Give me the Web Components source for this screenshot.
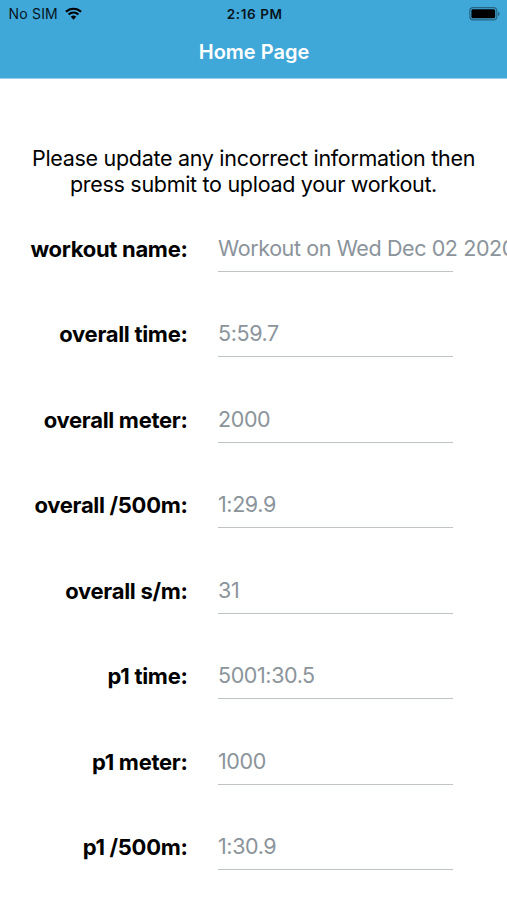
<!DOCTYPE html>
<html lang="en">
<head>
    <meta charset="UTF-8">
    <meta name="viewport" content="width=device-width, initial-scale=1.0">
    <title>Home Page</title>
    <style>
        body {
            margin: 0;
            height: 900px;
            overflow: hidden;
            background: #fff;
            color: #000;
            font-family: Inter, "Liberation Sans", sans-serif;
        }
    </style>
</head>
<body>
<workout-screen></workout-screen>

<script>

    class StatusBar extends HTMLElement {
        constructor() {
            super();
            this.attachShadow({mode: 'open'});
            this.shadowRoot.innerHTML = `
                <style>
                    :host {
                        display: grid;
                        grid-template-columns: 1fr auto 1fr;
                        align-items: center;
                        height: 27px;
                        padding: 0 6px 0 8.5px;
                        color: #06141b;
                        font-size: 13.5px;
                    }
                    .left { display: flex; align-items: center; gap: 7px; }
                    .time { font-weight: 600; letter-spacing: 0.6px; }
                    .battery { justify-self: end; }
                    svg { display: block; }
                    .carrier { font-size: 14px; letter-spacing: 0.2px; }
                </style>
                <div class="left">
                    <span class="carrier"><slot name="carrier"></slot></span>
                    <svg width="17" height="13" viewBox="0 0 18 13" fill="none" stroke="#000" stroke-width="2.3">
                        <path d="M1 4.7A11.5 11.5 0 0 1 17 4.7"/>
                        <path d="M3.8 7.6A7.4 7.4 0 0 1 14.2 7.6"/>
                        <path d="M9 13L6.1 10A4.2 4.2 0 0 1 11.9 10Z" fill="#000" stroke="none"/>
                    </svg>
                </div>
                <span class="time"><slot name="time"></slot></span>
                <svg class="battery" width="32" height="14" viewBox="0 0 32 14">
                    <rect x=".8" y=".6" width="27" height="12.2" rx="3.4" fill="none" stroke="#000" stroke-opacity=".4" stroke-width="1.2"/>
                    <rect x="2.4" y="2.2" width="23.8" height="9" rx="1.5"/>
                    <path d="M29.2 4.8a2.4 2.4 0 0 1 0 4.4z" opacity=".45"/>
                </svg>
            `;
        }
    }

    class NavHeader extends HTMLElement {
        constructor() {
            super();
            this.attachShadow({mode: 'open'});
            this.shadowRoot.innerHTML = `
                <style>
                    :host {
                        display: block;
                        box-sizing: border-box;
                        height: 79px;
                        border-bottom: 1px solid #9bd0eb;
                        background: #40a7d9;
                    }
                    .title {
                        padding: 12px 0 0 1px;
                        text-align: center;
                        font-size: 20px;
                        font-weight: 600;
                        line-height: 26px;
                        color: #fff;
                    }
                </style>
                <slot name="status"></slot>
                <div class="title"><slot></slot></div>
            `;
        }
    }

    class WorkoutField extends HTMLElement {
        constructor() {
            super();
            this.attachShadow({mode: 'open'});
            this.shadowRoot.innerHTML = `
                <style>
                    :host { display: flex; align-items: flex-start; height: 85.55px; line-height: 30px; }
                    .label {
                        width: 187.5px;
                        margin-right: 30.5px;
                        text-align: right;
                        font-weight: 700;
                        font-size: 22px;
                        letter-spacing: -0.3px;
                        white-space: nowrap;
                    }
                    .value {
                        width: 234.5px;
                        height: 37px;
                        border-bottom: 1px solid #bfc4c7;
                        color: #8b949b;
                        font-size: 21.5px;
                        letter-spacing: -0.4px;
                        line-height: 29px;
                        white-space: nowrap;
                    }
                </style>
                <div class="label"><slot name="label"></slot></div>
                <div class="value"><slot></slot></div>
            `;
        }
    }

    class WorkoutScreen extends HTMLElement {
        constructor() {
            super();
            this.attachShadow({mode: 'open'});
            const fields = [
                ['workout name:', 'Workout on Wed Dec 02 2020'],
                ['overall time:', '5:59.7'],
                ['overall meter:', '2000'],
                ['overall /500m:', '1:29.9'],
                ['overall s/m:', '31'],
                ['p1 time:', '5001:30.5'],
                ['p1 meter:', '1000'],
                ['p1 /500m:', '1:30.9']
            ];
            this.shadowRoot.innerHTML = `
                <style>
                    :host { display: block; width: 507px; height: 900px; overflow: hidden; }
                    p {
                        margin: 66px 0 35.8px;
                        text-align: center;
                        font-size: 21.5px;
                        letter-spacing: -0.3px;
                        line-height: 26.4px;
                    }
                </style>
                <nav-header>
                    <status-bar slot="status">
                        <span slot="carrier">No SIM</span>
                        <span slot="time">2:16 PM</span>
                    </status-bar>
                    Home Page
                </nav-header>
                <p>Please update any incorrect information then<br>press submit to upload your workout.</p>
                ${fields.map(([label, value]) => `
                    <workout-field><span slot="label">${label}</span>${value}</workout-field>
                `).join('')}
            `;
        }
    }

    customElements.define('status-bar', StatusBar);
    customElements.define('nav-header', NavHeader);
    customElements.define('workout-field', WorkoutField);
    customElements.define('workout-screen', WorkoutScreen);
</script>
</body>
</html>
